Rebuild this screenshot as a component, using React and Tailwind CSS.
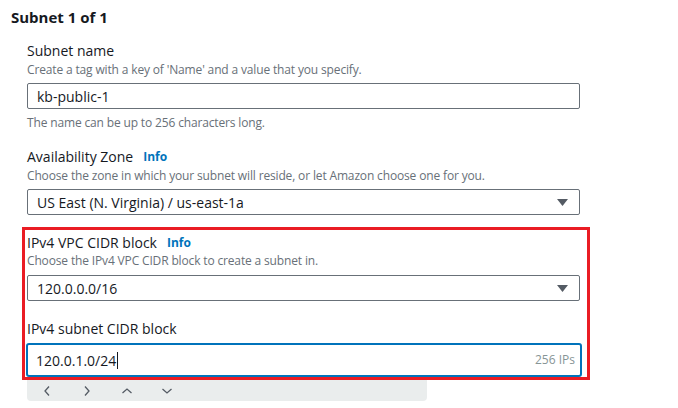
import React from 'react';

function Caret() {
  return (
    <svg width="11" height="7" viewBox="0 0 11 7" className="shrink-0">
      <path d="M0 0h11L5.5 7z" fill="#545b64" />
    </svg>
  );
}

function Chevron({ d }) {
  return (
    <svg width="14" height="14" viewBox="0 0 14 14" className="shrink-0">
      <path d={d} fill="none" stroke="#545b64" strokeWidth="1.3" />
    </svg>
  );
}

function Label({ children, info }) {
  return (
    <div className="flex items-center gap-[10px] text-[14px] leading-5 text-[#16191f]">
      <span>{children}</span>
      {info && <span className="text-[12px] font-bold text-[#0073bb]">Info</span>}
    </div>
  );
}

function Desc({ children }) {
  return <div className="text-[12px] leading-4 tracking-[-0.15px] text-[#687078]">{children}</div>;
}

function Select({ value }) {
  return (
    <div className="flex h-[26px] items-center justify-between rounded-[2px] border border-[#687078] pl-[9px] pr-[11px] text-[14px] text-[#16191f]">
      <span>{value}</span>
      <Caret />
    </div>
  );
}

export default function App() {
  return (
    <div className="h-[408px] w-[678px] overflow-hidden bg-white font-['Open_Sans','Noto_Sans',sans-serif]">
      {/* Section heading */}
      <div className="pl-[11px] pt-[7px] text-[15px] font-bold leading-5 text-[#16191f]">Subnet 1 of 1</div>

      <div className="pl-[27px] pr-[98px]">
        {/* Subnet name */}
        <div className="mt-[14px]">
          <Label>Subnet name</Label>
          <div className="mt-px">
            <Desc>Create a tag with a key of 'Name' and a value that you specify.</Desc>
          </div>
          <div className="mt-[5px] flex h-[26px] items-center rounded-[2px] border border-[#687078] pl-[9px] text-[14px] text-[#16191f]">
            kb-public-1
          </div>
          <div className="mt-[6px]">
            <Desc>The name can be up to 256 characters long.</Desc>
          </div>
        </div>

        {/* Availability zone */}
        <div className="mt-4">
          <Label info>Availability Zone</Label>
          <div className="mt-px">
            <Desc>Choose the zone in which your subnet will reside, or let Amazon choose one for you.</Desc>
          </div>
          <div className="mt-[5px]">
            <Select value="US East (N. Virginia) / us-east-1a" />
          </div>
        </div>

        {/* Highlighted CIDR fields */}
        <div className="-ml-[5px] mt-3 w-[568px] border-[3px] border-[#ea1c24] pl-[2px] pr-[7px] pt-[3px]">
          <Label info>IPv4 VPC CIDR block</Label>
          <Desc>Choose the IPv4 VPC CIDR block to create a subnet in.</Desc>
          <div className="mt-[6px]">
            <Select value="120.0.0.0/16" />
          </div>
          <div className="mt-[18px]">
            <Label>IPv4 subnet CIDR block</Label>
          </div>
          <div className="-ml-px -mr-[2px] mt-1 flex h-[34px] items-center justify-between rounded-[3px] border-2 border-[#0073bb] pl-[8px] pr-[5px] text-[14px] text-[#16191f]">
            <span className="flex items-center">
              120.0.1.0/24
              <span className="ml-px inline-block h-[17px] w-px bg-[#16191f]" />
            </span>
            <span className="text-[12px] text-[#879596]">256 IPs</span>
          </div>
        </div>

        {/* Pager toolbar */}
        <div className="flex h-[21px] w-[400px] items-center gap-[26px] rounded-b-[4px] bg-[#eaeded] pl-[13px]">
          <Chevron d="M9 2.5 5 7l4 4.5" />
          <Chevron d="M5 2.5 9 7l-4 4.5" />
          <Chevron d="M2.5 9 7 5l4.5 4" />
          <Chevron d="M2.5 5 7 9l4.5-4" />
        </div>
      </div>
    </div>
  );
}
